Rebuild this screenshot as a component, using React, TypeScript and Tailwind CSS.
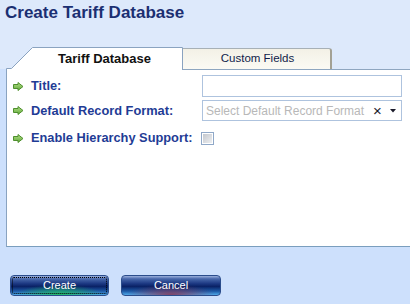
import React from "react";

function Arrow() {
  return (
    <svg width="11" height="9" viewBox="0 0 11 9" className="shrink-0">
      <defs>
        <linearGradient id="ag" x1="0" y1="0" x2="0" y2="1">
          <stop offset="0" stopColor="#b4df86" />
          <stop offset="1" stopColor="#5fa83a" />
        </linearGradient>
      </defs>
      <polygon
        points="0.5,2.5 5,2.5 5,0.5 10,4.5 5,8.5 5,6.5 0.5,6.5"
        fill="url(#ag)"
        stroke="#4f8f2e"
        strokeWidth="1"
        strokeLinejoin="miter"
      />
    </svg>
  );
}

function Label({ text }: { text: string }) {
  return (
    <div className="flex w-[189px] shrink-0 items-center gap-[7px]">
      <Arrow />
      <span className="text-[12.8px] font-bold text-[#1f3c95]">{text}</span>
    </div>
  );
}

export default function App() {
  return (
    <div className="relative h-[304px] w-[410px] overflow-hidden bg-[#cde0fc] font-['Liberation_Sans',Arial,sans-serif]">
      <div className="bg-[#dde9fb]">
        <div className="h-[47px] pl-[5px] pt-[2px] text-[17px] font-bold leading-[22px] text-[#1b2f72]">
          Create Tariff Database
        </div>
        <div className="ml-[6px] flex h-[22px] items-end">
          <div className="relative z-10 -mb-px flex h-[23px] w-[177px] items-center justify-center">
            <svg
              width="177"
              height="23"
              viewBox="0 0 177 23"
              className="absolute left-0 top-0"
            >
              <path
                d="M0.5,23 L0.5,21.5 L5.5,21.5 L26.5,0.5 L176.5,0.5 L176.5,23 Z"
                fill="#ffffff"
                stroke="none"
              />
              <path
                d="M0.5,23 L0.5,21.5 L5.5,21.5 L26.5,0.5 L176.5,0.5 L176.5,23"
                fill="none"
                stroke="#8aa3c0"
                strokeWidth="1"
              />
            </svg>
            <span className="relative pl-[20px] pt-[1px] text-[13px] font-bold text-[#111111]">
              Tariff Database
            </span>
          </div>
          <div className="flex h-[21px] w-[149px] items-center justify-center rounded-tr-[3px] border-r-2 border-t border-r-[#a3a194] border-t-[#a7b0b6] bg-[linear-gradient(#f3f1e6,#fbfaf4)]">
            <span className="pl-[2px] text-[11.5px] text-[#101c4a]">Custom Fields</span>
          </div>
        </div>
      </div>
      <div className="ml-[6px] h-[178px] w-[410px] border-b border-l border-t border-b-[#7a9ebe] border-l-[#8aa3c0] border-t-[#8ea6c0] bg-white pt-[5px]">
        <div className="flex h-[22px] items-center pl-[6px]">
          <Label text="Title:" />
          <div className="h-[22px] w-[200px] border border-[#aec3de] bg-white" />
        </div>
        <div className="mt-[3px] flex h-[21px] items-center pl-[6px]">
          <Label text="Default Record Format:" />
          <div className="flex h-[21px] w-[200px] items-center border border-[#aec3de] bg-white pl-[3px]">
            <div className="w-[164px] overflow-hidden whitespace-nowrap text-[12px] text-[#b8b8b8]">
              Select Default Record Format
            </div>
            <span className="ml-[3px] text-[15px] leading-none text-[#1a1a2a]">×</span>
            <svg width="6" height="4" viewBox="0 0 6 4" className="ml-[8px]">
              <polygon points="0,0 6,0 3,3.5" fill="#1a1a2a" />
            </svg>
          </div>
        </div>
        <div className="mt-[6px] flex h-[22px] items-center pl-[6px]">
          <Label text="Enable Hierarchy Support:" />
          <div className="-ml-px h-[13px] w-[13px] border border-[#8fa8c8] bg-white p-[1px]">
            <div className="h-full w-full bg-[linear-gradient(135deg,#c3c7cd,#eeeff1)]" />
          </div>
        </div>
      </div>
      <div className="mt-[28px] flex gap-[12px] pl-[10px]">
        <button className="flex h-[21px] w-[99px] items-center justify-center rounded-[4px] border border-[#2b4d8c] bg-[radial-gradient(ellipse_45%_55%_at_50%_100%,rgba(30,190,90,0.9),rgba(30,190,90,0)),linear-gradient(#9bb0dc_0%,#4868ab_15%,#1c3882_40%,#0a2266_55%,#1d5aa6_80%,#4faaea_100%)] text-[11px] text-white outline-1 outline-offset-[-3px] outline-dotted outline-black">
          Create
        </button>
        <button className="flex h-[21px] w-[100px] items-center justify-center rounded-[4px] border border-[#2b4d8c] bg-[radial-gradient(ellipse_45%_55%_at_50%_100%,rgba(140,50,80,0.85),rgba(140,50,80,0)),linear-gradient(#9bb0dc_0%,#4868ab_15%,#1c3882_40%,#0a2266_55%,#1d5aa6_80%,#4faaea_100%)] text-[11px] text-white">
          Cancel
        </button>
      </div>
    </div>
  );
}
